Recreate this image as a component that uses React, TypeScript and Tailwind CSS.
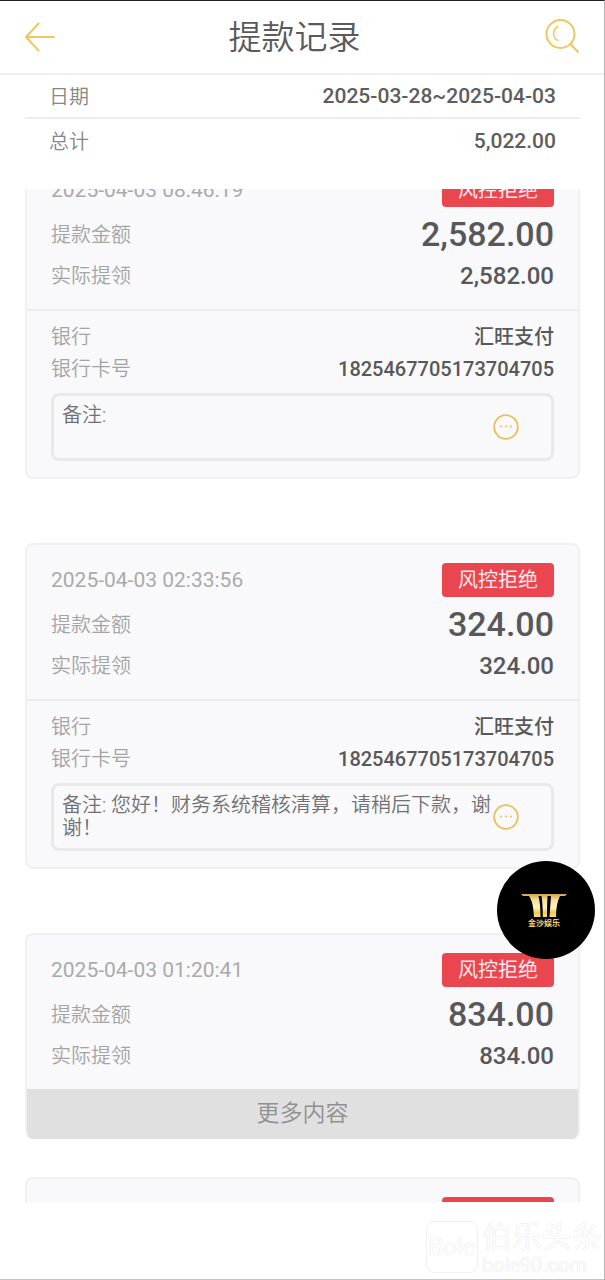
import React from "react";

type Withdrawal = {
  time: string;
  amount: string;
  bank?: string;
  card?: string;
  note?: string;
};

const records: Withdrawal[] = [
  { time: "2025-04-03 08:46:19", amount: "2,582.00", bank: "汇旺支付", card: "1825467705173704705", note: "" },
  {
    time: "2025-04-03 02:33:56",
    amount: "324.00",
    bank: "汇旺支付",
    card: "1825467705173704705",
    note: "您好！财务系统稽核清算，请稍后下款，谢谢！",
  },
  { time: "2025-04-03 01:20:41", amount: "834.00" },
];

function BackIcon() {
  return (
    <svg width="32" height="32" viewBox="0 0 32 32" fill="none" stroke="#efc75e" strokeWidth="2" strokeLinecap="round" strokeLinejoin="round">
      <path d="M30 16H2M14.500 2.500 2 16l12.500 13.500" />
    </svg>
  );
}

function SearchIcon() {
  return (
    <svg width="36" height="36" viewBox="0 0 36 36" fill="none" stroke="#efc75e" strokeWidth="2" strokeLinecap="round">
      <circle cx="15.5" cy="15" r="14" />
      <path d="m25.500 25 7.500 8" />
      <path d="M13 7.500c-6 3-6 11 0 14" strokeWidth="1.500" />
    </svg>
  );
}

function MoreIcon() {
  return (
    <svg width="26" height="26" viewBox="0 0 26 26" fill="none">
      <circle cx="13" cy="13" r="11.800" stroke="#eabf5a" strokeWidth="1.800" />
      <g fill="#eabf5a">
        <circle cx="8" cy="12.500" r="1" />
        <circle cx="13" cy="12.500" r="1" />
        <circle cx="18" cy="12.500" r="1" />
      </g>
    </svg>
  );
}

function Badge() {
  return (
    <span className="flex h-[34px] w-28 items-center justify-center rounded-sm bg-[#ea4650] text-xl text-[#ffe9ea]">风控拒绝</span>
  );
}

function Row({ label, className, children }: { label: string; className: string; children: React.ReactNode }) {
  return (
    <div className={`flex items-center justify-between ${className}`}>
      <dt className="font-[350] text-[#a4a4a5]">{label}</dt>
      <dd className="font-medium text-[#58585a]">{children}</dd>
    </div>
  );
}

function Card({ item }: { item: Withdrawal }) {
  return (
    <article
      className={`shrink-0 overflow-hidden rounded-lg border-2 border-[#f0f0f1] bg-[#f9f9fb] text-xl ${item.bank ? "" : "border-b-0"}`}
    >
      <div className="px-6 pt-[18px] pb-4">
        <div className="flex items-center justify-between">
          <time className="pt-0.5 text-[21px] text-[#aaaaab]">{item.time}</time>
          <Badge />
        </div>
        <dl className="mt-1">
          <Row label="提款金额" className="h-12">
            <span className="text-[34px]">{item.amount}</span>
          </Row>
          <Row label="实际提领" className="h-[34px]">
            <span className="text-2xl">{item.amount}</span>
          </Row>
        </dl>
      </div>
      {item.bank ? (
        <div className="border-t-2 border-[#ececed] px-6 pt-2.5 pb-4">
          <dl>
            <Row label="银行" className="h-8">{item.bank}</Row>
            <Row label="银行卡号" className="h-8">{item.card}</Row>
          </dl>
          <div className="mt-2 flex h-[68px] justify-between rounded-lg border-3 border-[#e9e9ea] pr-8 pl-2">
            <p className="pt-2 leading-[23px] font-[350] text-[#717173]">备注: {item.note}</p>
            <button type="button" aria-label="查看备注" className="shrink-0">
              <MoreIcon />
            </button>
          </div>
        </div>
      ) : (
        <button type="button" className="block h-[50px] w-full bg-[#e0e0e0] text-[23px] font-[350] text-[#909092]">
          更多内容
        </button>
      )}
    </article>
  );
}

function FloatingLogo() {
  return (
    <a
      href="#home"
      aria-label="金沙娱乐"
      className="absolute top-[860px] right-[9px] flex size-[98px] flex-col items-center justify-center rounded-full bg-black pr-1"
    >
      <svg width="46" height="26" viewBox="0 0 46 26">
        <defs>
          <linearGradient id="gold" x1="0" x2="0" y1="0" y2="26" gradientUnits="userSpaceOnUse">
            <stop offset="0" stopColor="#c39a4a" />
            <stop offset="0.250" stopColor="#f6dc90" />
            <stop offset="0.550" stopColor="#fff3bd" />
            <stop offset="0.750" stopColor="#f0cb5c" />
            <stop offset="1" stopColor="#fbe88a" />
          </linearGradient>
        </defs>
        <g fill="url(#gold)">
          <path d="M0 1h46l-2 2H2Z" />
          <path d="M8 3h9.500c1.500 6 2 13 2 21H13C12.500 15 11.500 8 8 3Z" />
          <path d="M20.500 3h6c-.5 7-.5 14-.5 21h-4.200c0-8-.3-15-1.300-21Z" />
          <path d="M30 3h9c-3 6-4 13-4 21h-6.500Z" />
        </g>
      </svg>
      <span className="text-[8px] leading-[9px] font-bold text-[#f0d57c]">金沙娱乐</span>
    </a>
  );
}

export default function App() {
  return (
    <div className="relative flex h-screen flex-col overflow-hidden border-t border-r border-t-[#222] border-r-[#b4b4b4] bg-white font-['Roboto','Noto_Sans_CJK_SC',sans-serif]">
      <header className="flex h-[74px] shrink-0 items-center justify-between border-b-2 border-[#efefef] pr-[23px] pl-6">
        <button type="button" aria-label="返回">
          <BackIcon />
        </button>
        <h1 className="flex-1 pt-0.5 pr-3 text-center text-[33px] font-[350] text-[#5a5a5a]">提款记录</h1>
        <button type="button" aria-label="搜索">
          <SearchIcon />
        </button>
      </header>

      <dl className="mr-6 ml-[25px] shrink-0 pb-[26px] text-xl">
        <div className="flex h-11 items-center justify-between border-b-2 border-[#ededed] px-6 pt-0.5">
          <dt className="font-[350] text-[#868686]">日期</dt>
          <dd className="text-[21px] font-medium text-[#5d5d5d]">2025-03-28~2025-04-03</dd>
        </div>
        <div className="flex h-11 items-center justify-between px-6 pt-0.5">
          <dt className="font-[350] text-[#868686]">总计</dt>
          <dd className="text-[21px] font-medium text-[#5d5d5d]">5,022.00</dd>
        </div>
      </dl>

      <main className="min-h-0 flex-1 overflow-hidden pr-6 pl-[25px]">
        <div className="-mt-9 flex flex-col">
          <div className="flex flex-col gap-16">
            {records.map((item) => (
              <Card key={item.time} item={item} />
            ))}
          </div>
          <div className="mt-[38px] rounded-t-lg border-2 border-b-0 border-[#f0f0f1] bg-[#f9f9fb] px-6 pt-[18px]">
            <div className="flex h-10 justify-end">
              <span className="h-[34px] w-28 rounded-sm bg-[#ea4650]" />
            </div>
          </div>
        </div>
      </main>

      <footer className="flex h-[78px] shrink-0 items-end justify-end border-b border-[#c4c4c4] pb-1">
        <div className="flex items-center gap-1 pr-0.5 text-[#fdfdfd] [text-shadow:0_0_1px_#cfcfcf]">
          <span className="flex size-[52px] items-center justify-center rounded-lg border border-[#f2f2f2] text-2xl">Bole</span>
          <span className="flex flex-col">
            <span className="text-3xl leading-9">伯乐头条</span>
            <span className="text-xl leading-5">bole90.com</span>
          </span>
        </div>
      </footer>

      <FloatingLogo />
    </div>
  );
}
